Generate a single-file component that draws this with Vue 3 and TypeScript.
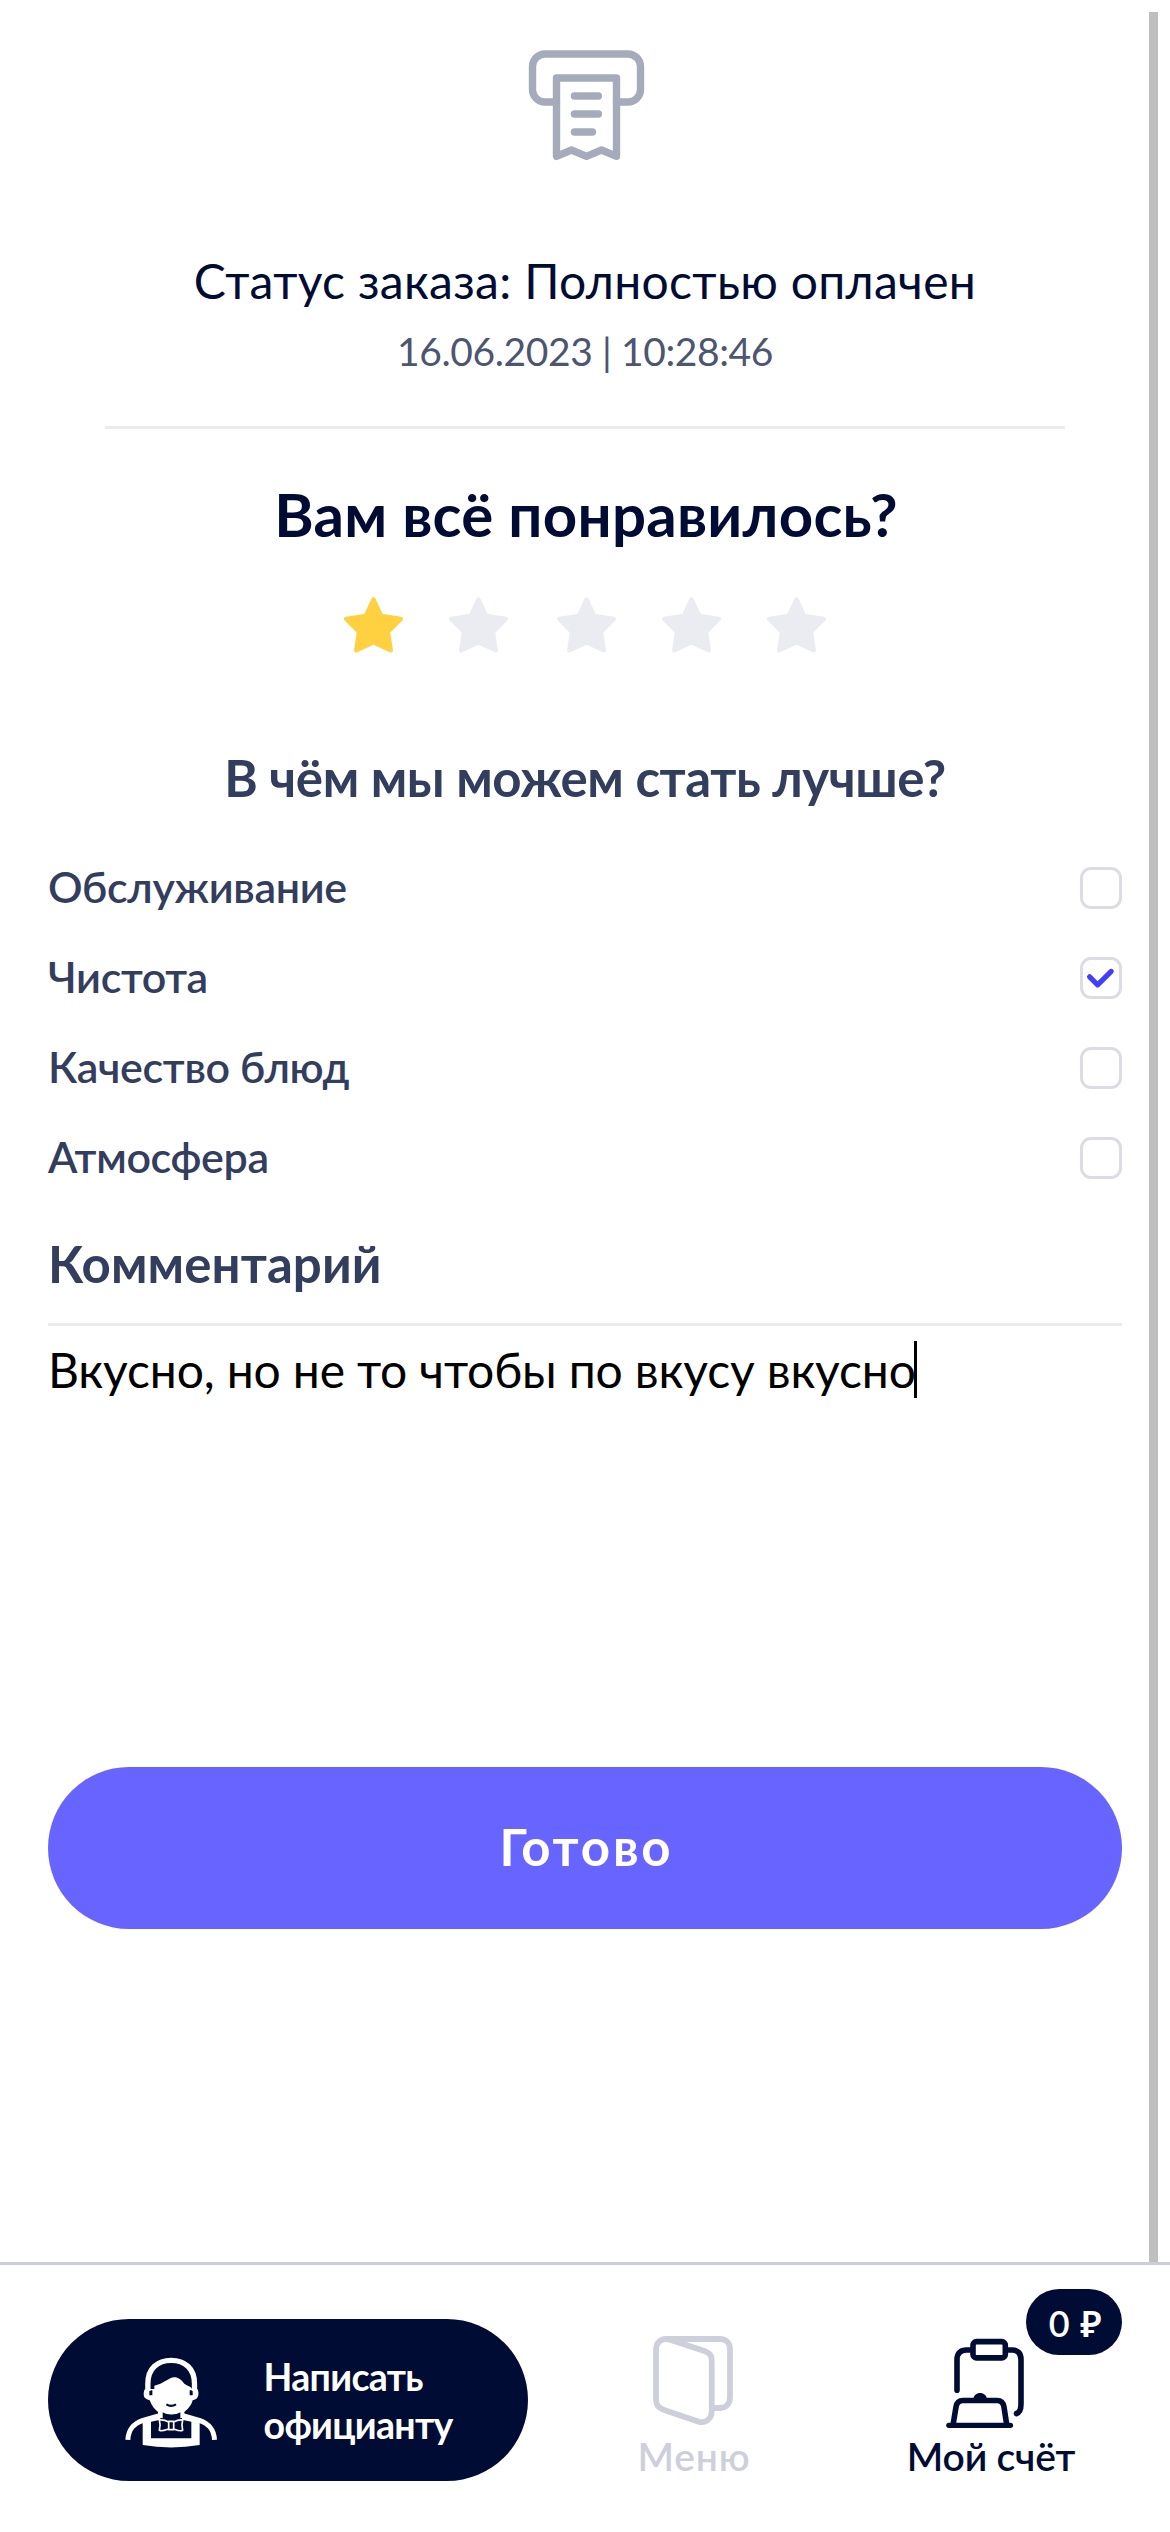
<script setup lang="ts">
import { ref } from 'vue'

interface Topic {
  id: string
  label: string
  checked: boolean
}

const rating = ref<number>(1)
const comment = ref<string>('Вкусно, но не то чтобы по вкусу вкусно')
const topics = ref<Topic[]>([
  { id: 'service', label: 'Обслуживание', checked: false },
  { id: 'cleanliness', label: 'Чистота', checked: true },
  { id: 'quality', label: 'Качество блюд', checked: false },
  { id: 'atmosphere', label: 'Атмосфера', checked: false },
])

function toggle(topic: Topic): void {
  topic.checked = !topic.checked
}
</script>

<template>
  <div class="screen">
    <main class="content">
      <svg class="receipt" viewBox="528 49 118 112" fill="none">
        <g stroke="#a6abbc" stroke-width="7.4" stroke-linecap="round" stroke-linejoin="round">
          <path d="M556.5 102H545a12.5 12.5 0 0 1-12.5-12.5v-23A12.5 12.5 0 0 1 545 54h83a12.5 12.5 0 0 1 12.5 12.5v23A12.5 12.5 0 0 1 628 102h-11.5" />
          <path d="M556.5 78h60v78.3l-15-6.3-15 6.3-15-6.3-15 6.3z" />
          <path d="M574.4 96h24M574.4 114h24M574.4 132h18" />
        </g>
      </svg>

      <p class="status">Статус заказа: Полностью оплачен</p>
      <p class="date">16.06.2023 | 10:28:46</p>
      <hr class="divider" />

      <h1 class="title">Вам всё понравилось?</h1>
      <div class="stars">
        <button v-for="n in 5" :key="n" class="star" :class="{ active: n <= rating }" @click="rating = n">
          <svg viewBox="0 0 59 56">
            <path d="M29.5 2.6L37.1 18.9L56.7 21.9L43.9 34.8L46.7 53.3L29.5 45.2L12.3 53.3L15.1 34.8L2.3 21.9L21.9 18.9Z" />
          </svg>
        </button>
      </div>

      <h2 class="subtitle">В чём мы можем стать лучше?</h2>
      <ul class="topics">
        <li v-for="topic in topics" :key="topic.id" class="topic" @click="toggle(topic)">
          <span class="topic-label">{{ topic.label }}</span>
          <span class="checkbox">
            <svg v-if="topic.checked" viewBox="0 0 36 36" fill="none">
              <path d="M6.6 16.8L14.6 24.8L28.2 11.4" stroke="#403dff" stroke-width="5.2" stroke-linecap="round" stroke-linejoin="round" />
            </svg>
          </span>
        </li>
      </ul>

      <h3 class="comment-title">Комментарий</h3>
      <div class="comment"><span>{{ comment }}</span><i class="caret"></i></div>

      <button class="submit">Готово</button>
      <div class="scrollbar"></div>
    </main>

    <nav class="bar">
      <button class="waiter">
        <svg class="waiter-icon" viewBox="44 82 278 274" fill="none">
          <path d="M112.5 184V162C112.5 116 142 92 182.5 92S252.5 116 252.5 162V184" stroke="#fff" stroke-width="16" />
          <path fill="#fff" fill-rule="evenodd" d="M104 178C99 184 99 197 102 203C106 208 112 211 118 212C124 229 133 239 143 247V262L157 266V248C172 257 194 257 210 248V266L222 262V247C232 239 243 228 247 212C254 210 260 207 262 202C266 195 265 184 261 178L245 178C242 172 238 170 232 168L222 162C216 153 209 147 201 144C193 142 186 142 180 146L150 162L132 168V178ZM117 182H126V197H117ZM238 182H247V197H238Z" />
          <path d="M168 224Q182 233 197 224" stroke="#000c33" stroke-width="6.5" />
          <path d="M52.5 331C54 296 72 281 98 272L150 257M312.5 331C311 296 293 281 267 272L215 257" stroke="#fff" stroke-width="15" />
          <path fill="#fff" fill-rule="evenodd" d="M97 268L150 257V270L122 276V326H243V276L215 270V257L268 268V346Q182 361 97 346Z" />
          <path d="M175 277C164 271 155 270 147 271C151 284 150 290 147 302C155 306 163 302 175 298M190 277C201 271 209 270 217 271C213 284 214 290 217 302C209 306 201 302 190 298M175 275H190V300H175Z" stroke="#fff" stroke-width="5" stroke-linejoin="round" />
        </svg>
        <span class="waiter-text">Написать<br />официанту</span>
      </button>

      <a class="tab menu">
        <svg class="menu-icon" viewBox="653 2336 80 90" fill="none" stroke="#cdd0da" stroke-width="5.8" stroke-linejoin="round">
          <path d="M656 2350C656 2342 662 2337 670 2339.8L704.5 2351C709 2352.5 711.7 2355.5 711.7 2360V2411.5C711.7 2419 705 2424 698 2421.5L663.5 2409.8C659 2408 656 2404.5 656 2400Z" />
          <path d="M665 2339H720C726 2339 730 2343 730 2349V2397C730 2404 726 2408 720 2408H713" />
        </svg>
        <span class="tab-label">Меню</span>
      </a>

      <a class="tab bill">
        <svg class="bill-icon" viewBox="946 2336 82 93" fill="none" stroke="#000c33" stroke-width="5.6" stroke-linecap="round" stroke-linejoin="round">
          <rect x="974" y="2341.6" width="32.3" height="16.3" rx="3.5" />
          <path d="M972 2350H967.5C961.5 2350 958 2353.5 958 2359.5V2390.2" />
          <path d="M1008 2350H1013C1019 2350 1022 2353.5 1022 2359.5V2404C1022 2409 1020.5 2412.5 1017.5 2413.5" />
          <path d="M954.2 2424L957 2407C957.7 2402.5 960 2400.5 964 2400.5H998C1002 2400.5 1004.3 2402.5 1005 2407L1007.6 2424" />
          <path d="M949.8 2425.3H1011.5" stroke-width="5.2" />
          <path d="M974.2 2400C974.2 2390.5 988 2390.5 988 2400Z" fill="#000c33" stroke="none" />
        </svg>
        <span class="tab-label">Мой счёт</span>
        <span class="badge">0 ₽</span>
      </a>
    </nav>
  </div>
</template>

<style>
body {
  background: #fff;
}
</style>

<style scoped>
.screen {
  width: 1170px;
  height: 2532px;
  display: flex;
  flex-direction: column;
  background: #fff;
  font-family: Lato, "Noto Sans", sans-serif;
  overflow: hidden;
}

.content {
  position: relative;
  flex: 1;
  box-sizing: border-box;
  padding: 49px 48px 0;
  display: flex;
  flex-direction: column;
  align-items: center;
}

p,
h1,
h2,
h3,
ul,
hr {
  margin: 0;
  padding: 0;
}

button {
  border: 0;
  padding: 0;
  background: none;
  font-family: inherit;
}

.receipt {
  width: 118px;
  height: 112px;
  margin-left: 4px;
  flex: none;
}

.status {
  margin-top: 90px;
  font-size: 48px;
  line-height: 60px;
  letter-spacing: 0.31px;
  color: #000c33;
}

.date {
  margin-top: 16px;
  font-size: 39px;
  line-height: 48px;
  letter-spacing: -0.4px;
  color: #4d5570;
}

.divider {
  width: 960px;
  height: 3px;
  margin-top: 51px;
  border: 0;
  background: #ebecf0;
}

.title {
  margin-top: 49px;
  margin-left: 2px;
  font-size: 60px;
  line-height: 72px;
  font-weight: 700;
  letter-spacing: 0.25px;
  color: #000c33;
}

.stars {
  margin-top: 47px;
  display: flex;
  gap: 46px;
}

.star {
  width: 59px;
  height: 56px;
}

.star:nth-child(3) {
  margin-left: 3px;
}

.star svg {
  display: block;
  width: 59px;
  height: 56px;
  fill: #ebecf1;
  stroke: #ebecf1;
  stroke-width: 4.5;
  stroke-linejoin: round;
}

.star.active svg {
  fill: #ffd040;
  stroke: #ffd040;
}

.subtitle {
  margin-top: 95px;
  font-size: 51px;
  line-height: 60px;
  font-weight: 700;
  letter-spacing: -0.42px;
  color: #333d5e;
}

.topics {
  align-self: stretch;
  margin-top: 59px;
  list-style: none;
  display: flex;
  flex-direction: column;
  gap: 48px;
}

.topic {
  height: 42px;
  display: flex;
  justify-content: space-between;
  align-items: center;
}

.topic-label {
  padding-bottom: 3px;
  font-size: 43px;
  line-height: 42px;
  font-weight: 600;
  letter-spacing: -0.35px;
  color: #333d5e;
}

.checkbox {
  width: 36px;
  height: 36px;
  border: 3px solid #dcdde4;
  border-radius: 11px;
}

.checkbox svg {
  display: block;
}

.comment-title {
  align-self: stretch;
  margin-top: 55px;
  font-size: 51px;
  line-height: 60px;
  font-weight: 700;
  letter-spacing: 0.1px;
  color: #333d5e;
}

.comment {
  align-self: stretch;
  box-sizing: border-box;
  height: 444px;
  margin-top: 29px;
  padding-top: 14px;
  border-top: 3px solid #ebecf0;
  display: flex;
  align-items: flex-start;
  font-size: 48px;
  line-height: 60px;
  letter-spacing: -0.14px;
  color: #000;
}

.caret {
  width: 3px;
  height: 57px;
  margin: 1px 0 0 -2px;
  background: #000;
}

.submit {
  align-self: stretch;
  box-sizing: border-box;
  height: 162px;
  padding: 0 0 3px 3px;
  border-radius: 81px;
  background: #6864ff;
  color: #fff;
  font-size: 51px;
  line-height: 60px;
  font-weight: 700;
  letter-spacing: 2.8px;
}

.scrollbar {
  position: absolute;
  top: 12px;
  right: 12px;
  bottom: 0;
  width: 9px;
  background: #bfbfbf;
}

.bar {
  flex: none;
  box-sizing: border-box;
  height: 270px;
  border-top: 3px solid #cbcdd8;
  padding: 0 48px;
  display: flex;
  align-items: flex-start;
}

.waiter {
  width: 480px;
  height: 162px;
  margin-top: 54px;
  border-radius: 81px;
  background: #000c33;
  color: #fff;
  display: flex;
  align-items: center;
}

.waiter-icon {
  width: 92.7px;
  height: 91.3px;
  margin: 6px 0 0 76.7px;
}

.waiter-text {
  margin-left: 46.2px;
  margin-top: 1px;
  text-align: left;
  font-size: 37.5px;
  line-height: 48px;
  font-weight: 700;
  letter-spacing: -0.7px;
}

.tab {
  position: relative;
  display: flex;
  flex-direction: column;
  align-items: center;
  font-size: 39px;
  font-weight: 600;
}

.tab-label {
  line-height: 48px;
  white-space: nowrap;
}

.menu {
  width: 120px;
  margin-left: 105px;
  padding-top: 71px;
  color: #cdd0da;
}

.menu .tab-label {
  margin-top: 6px;
  margin-left: 2px;
  letter-spacing: 0.8px;
}

.menu-icon {
  width: 80px;
  height: 90px;
}

.bill {
  width: 264px;
  margin-left: 105px;
  padding-top: 71px;
  color: #000c33;
}

.bill-icon {
  width: 82px;
  height: 93px;
  margin-right: 8px;
}

.bill .tab-label {
  margin-top: 3px;
  margin-left: 2px;
  letter-spacing: -0.2px;
}

.badge {
  position: absolute;
  top: 24px;
  right: 0;
  width: 96px;
  height: 66px;
  box-sizing: border-box;
  padding: 3px 0 0 3px;
  border-radius: 33px;
  background: #000c33;
  color: #fff;
  font-size: 36px;
  line-height: 62px;
  letter-spacing: 0.8px;
  text-align: center;
}
</style>
